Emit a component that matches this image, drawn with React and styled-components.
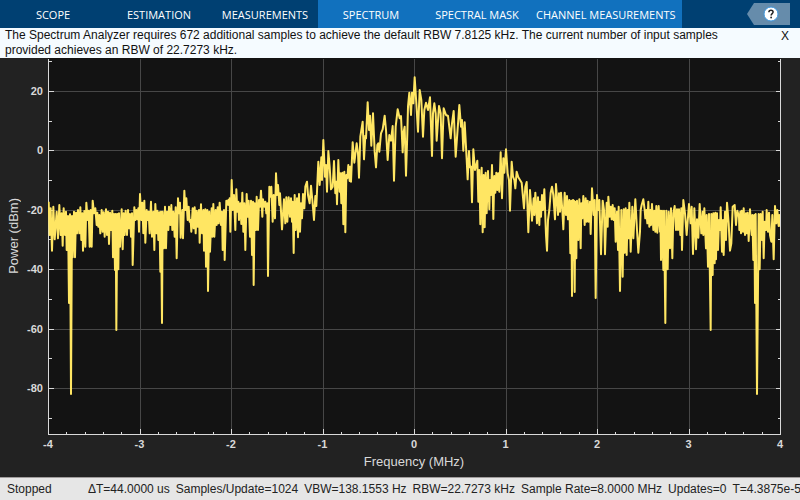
import React from "react";
import styled, { createGlobalStyle } from "styled-components";

const GlobalStyle = createGlobalStyle`
  *, *::before, *::after { box-sizing: border-box; }
  body { margin: 0; background: #222222; font-family: "Liberation Sans", Arial, sans-serif; }
`;

const Window = styled.div`
  display: flex;
  flex-direction: column;
  height: 100vh;
  overflow: hidden;
`;

const Ribbon = styled.header`
  display: flex;
  align-items: stretch;
  flex: none;
  height: 28px;
  background: #004072;
`;

const TabGroup = styled.nav`
  display: flex;
  background: ${(p) => (p.$active ? "#1171be" : "transparent")};
`;

const Tab = styled.button`
  min-width: 106px;
  padding: 2px 6px 0;
  border: 0;
  background: transparent;
  color: #ffffff;
  font: 11px/16px "Open Sans", "Noto Sans", sans-serif;
  white-space: nowrap;
`;

const HelpButton = styled.button`
  align-self: flex-start;
  display: flex;
  align-items: center;
  justify-content: center;
  width: 43px;
  height: 22px;
  margin: 3px 10px 0 auto;
  padding: 0 0 0 5px;
  border: 0;
  background: #668cab;
  clip-path: polygon(0 50%, 7px 0, 100% 0, 100% 100%, 7px 100%);
`;

const Notice = styled.section`
  display: flex;
  align-items: flex-start;
  justify-content: space-between;
  flex: none;
  min-height: 30px;
  padding-left: 5px;
  background: #f5fbff;
  color: #111111;
  font-size: 12px;
  line-height: 15px;
`;

const NoticeText = styled.p`
  max-width: 740px;
  margin: 0;
`;

const CloseButton = styled.button`
  width: 30px;
  padding: 0;
  border: 0;
  background: transparent;
  color: #111111;
  font: 12px/16px "Liberation Sans", Arial, sans-serif;
`;

const ChartPanel = styled.main`
  display: grid;
  grid-template-columns: 48px minmax(0, 1fr);
  flex: 1;
  min-height: 0;
  padding: 0 20px 43px 0;
  background: #222222;
  overflow: hidden;
`;

const YTitle = styled.div`
  justify-self: start;
  align-self: center;
  margin-bottom: 20px;
  padding-right: 6px;
  writing-mode: vertical-rl;
  transform: rotate(180deg);
  color: #d9d9d9;
  font-size: 13px;
  line-height: 16px;
  white-space: nowrap;
`;

const Plot = styled.svg`
  display: block;
  width: 100%;
  height: 100%;
  min-height: 0;
  overflow: visible;
`;

const GridLine = styled.line`
  stroke: #474747;
  shape-rendering: crispEdges;
`;

const AxisLine = styled.line`
  stroke: #d9d9d9;
  shape-rendering: crispEdges;
`;

const TickLabel = styled.text`
  fill: #d9d9d9;
  font: bold 11px "Liberation Sans", Arial, sans-serif;
`;

const AxisTitle = styled.text`
  fill: #d9d9d9;
  font: 13px "Liberation Sans", Arial, sans-serif;
`;

const Trace = styled.polyline`
  fill: none;
  stroke: #ffe663;
  stroke-width: 2px;
  stroke-linejoin: round;
  vector-effect: non-scaling-stroke;
`;

const StatusBar = styled.footer`
  display: flex;
  align-items: center;
  flex: none;
  height: 23px;
  padding-left: 7px;
  border-top: 1px solid #a09c9c;
  background: #e6e6e6;
  color: #222222;
  font-size: 12px;
  line-height: 16px;
  white-space: nowrap;
  overflow: hidden;
`;

const StatusState = styled.span`
  flex: none;
  width: 81px;
`;

const Metrics = styled.div`
  display: flex;
  gap: 6px;
`;

const X_MIN = -4;
const X_MAX = 4;
const Y_MAX = 31.1;
const Y_MIN = -95.5;
const xPct = (v) => `${((v - X_MIN) / (X_MAX - X_MIN)) * 100}%`;
const yPct = (v) => `${((Y_MAX - v) / (Y_MAX - Y_MIN)) * 100}%`;

const X_MAJOR = [-4, -3, -2, -1, 0, 1, 2, 3, 4];
const X_MINOR = Array.from({ length: 41 }, (_, i) => X_MIN + i / 5).filter((_, i) => i % 5);
const Y_MAJOR = [20, 0, -20, -40, -60, -80];
const Y_MINOR = [30, 10, -10, -30, -50, -70, -90];

// Sweep data, split into bands; each band has its own origin on the 2196 x 1128 trace canvas.
const BANDS = [
  {
    x: -24, y: 366,
    points: "26,65 29,165 32,85 36,212 40,80 44,178 50,95 54,175 58,75 62,165 65,100 68,197 71,85 75,165 78,95 80,210 84,108 87,369 90,103 93,642 96,108 98,232 102,95 105,232 108,98 111,160 114,90 118,160 121,82 124,180 127,100 129,212 133,93 136,200 139,68 143,120 146,92 149,200 152,90 155,200 158,62 162,100 166,85 170,135 172,98 175,140 178,105 181,160 185,90 188,155 191,97 194,170 198,88 201,165 204,95 207,192 210,98 213,150 217,92 219,232 222,102 225,270 227,102 229,450 232,102 235,268 237,100 240,200 245,88 248,208 251,100 254,165 257,92 261,165 264,90 267,145 270,102 273,170 276,100 278,255 283,82 286,120 289,90 292,118 295,85 297,155 300,42 304,120 307,68 310,160 313,62 316,188 320,90 323,120 326,95 329,160 333,65 336,170 340,95 343,210 346,72 350,160 352,92 355,180 358,97 361,275 363,95",
  },
  {
    x: 336, y: 336,
    points: "6,459 8,125 12,235 15,110 18,235 21,125 25,180 27,110 31,165 34,105 37,180 40,125 44,200 47,112 50,265 54,85 57,130 60,98 62,203 67,120 69,205 73,62 76,120 79,85 83,150 86,110 89,155 92,150 94,185 98,115 101,175 104,112 107,190 110,122 113,170 117,120 119,218 123,103 126,190 130,120 132,242 136,118 138,290 142,120 144,363 148,125 150,245 155,115 157,200 160,102 163,200 167,120 170,165 173,112 176,160 179,98 183,165 186,125 188,240 192,120 194,270 199,92 201,105 205,90 207,105 209,85 211,185 215,30 218,120 222,75 226,180 229,58 232,125 235,95 237,150 241,100 244,162 247,68 250,185 253,100 256,240 260,72 263,140 266,92 270,200 273,92 276,255 279,95 281,345 284,100 288,180 290,80 294,180 297,90 300,110 303,62 307,140 309,88 313,110 316,95 319,130 322,100 324,318 328,50 331,80 334,50 338,155 341,75 345,145 348,10 351,75 354,45 358,105",
  },
  {
    x: 696, y: 36,
    points: "0,370 6,478 12,388 16,460 19,382 22,455 26,382 30,440 33,385 36,455 38,395 41,549 44,375 47,480 51,385 54,502 57,372 60,485 63,400 66,445 69,372 73,415 76,350 81,335 84,375 89,400 93,347 97,390 102,450 106,378 109,408 115,275 119,345 124,262 126,330 130,210 135,320 138,285 141,365 145,243 149,290 153,358 158,350 162,273 166,370 169,335 171,403 175,270 179,365 181,310 184,400 187,308 190,463 193,305 196,487 199,315 202,325 205,285 209,333 211,290 213,335 218,217 223,278 230,220 234,250 237,323 241,200 248,155 252,268 256,197 258,205 263,97 267,180 270,137 274,227 279,130 284,245 288,292 292,225 295,220 298,245 303,190 308,178 314,137 318,180 323,270 328,195 333,212 338,168 342,332 347,170 353,118 359,145 363,138 368,247 371,185 374,170 378,317 382,190",
  },
  {
    x: 1056, y: 36,
    points: "24,110 28,68 33,135 36,68 40,100 44,22 49,100 54,185 59,60 64,90 69,200 73,120 78,98 84,120 90,82 96,258 99,130 103,100 107,130 110,212 117,108 122,130 126,265 131,115 138,135 144,138 152,205 156,160 161,123 167,260 172,190 178,105 183,170 186,150 190,242 194,157 200,268 203,328 207,243 210,292 213,290 216,397 220,238 225,300 229,285 232,272 235,395 238,300 241,463 245,293 248,487 251,315 254,472 257,308 260,430 264,303 268,418 270,330 273,375 276,285 280,447 283,318 286,368 289,308 292,360 295,310 298,365 302,247 306,385 310,265 313,308 318,238 323,310 327,330 330,422 335,275 339,320 343,330 346,355 350,305 355,322",
  },
  {
    x: 1416, y: 306,
    points: "0,60 5,68 12,145 16,80 20,66 25,217 30,90 36,182 41,115 43,165 46,98 51,190 54,112 58,195 60,125 63,170 66,105 69,150 73,88 78,225 81,272 84,180 88,150 92,98 96,80 100,105 105,178 108,72 114,165 117,100 120,155 123,98 127,150 130,208 134,98 138,165 141,108 144,178 148,120 151,280 154,122 156,408 159,120 161,300 162,122 164,396 166,125 169,295 171,122 175,240 178,118 182,265 184,130 187,175 190,108 194,195 197,115 200,185 203,122 206,185 210,125 212,222 216,85 221,165 224,120 227,414 231,105 234,150 238,120 243,283 248,122 252,150 255,283 260,128 263,200 265,110 269,170 272,140 275,178 278,135 281,180 284,145 287,245 291,155 294,270 296,140 300,393 304,150 308,350 311,148 314,278 317,145 320,285 323,150 326,235 328,128 332,275 337,140 340,235 346,118 351,210 355,278 360,215 362,150 365,135 370,118 374,150 376,175 379,150 382,190 385,125 388,200",
  },
  {
    x: 1806, y: 366,
    points: "1,90 3,135 6,72 10,150 13,92 16,155 19,78 22,158 26,78 30,155 31,92 33,240 36,92 40,270 42,92 46,429 49,92 53,268 56,95 60,205 63,85 67,235 70,100 74,78 78,150 81,88 84,150 87,88 91,165 94,85 96,210 100,60 105,100 110,165 117,72 122,130 125,80 129,222 133,85 138,208 141,118 145,173 149,72 154,160 158,95 160,165 163,85 166,160 168,205 170,105 174,260 177,102 182,450 184,102 188,285 190,100 194,250 196,98 198,238 201,100 204,210 207,120 210,150 212,82 216,215 219,120 221,225 225,95 228,180 231,68 236,130 240,212 244,190 248,80 254,75 258,135 262,92 267,110 268,150 271,95 273,160 275,92 279,155 281,85 285,165 288,100 291,160 293,98 296,183 300,88 303,140 305,165 307,105 310,240 313,105 315,369 317,102 321,642 326,102 329,268 332,102 336,180 338,95 341,235 344,125 348,150 350,90 354,155 357,98 360,165 364,185 367,105 371,238 375,78 379,130 382,90 386,138 388,105 390,140",
  },
];

const TRACE_POINTS = BANDS.map((band) =>
  band.points
    .split(" ")
    .map((pair) => {
      const [x, y] = pair.split(",").map(Number);
      return `${x + band.x},${y + band.y}`;
    })
    .join(" ")
).join(" ");

// A tick is anchored at a percentage and runs a fixed length inwards from its edge.
function YTicks({ values, length }) {
  return values.map((v) => (
    <React.Fragment key={v}>
      <AxisLine x1="0" x2={length} y1={yPct(v)} y2={yPct(v)} />
      <svg x="100%" overflow="visible">
        <AxisLine x1={-length} x2="0" y1={yPct(v)} y2={yPct(v)} />
      </svg>
    </React.Fragment>
  ));
}

function XTicks({ values, length }) {
  return (
    <svg y="100%" overflow="visible">
      {values.map((v) => (
        <AxisLine key={v} x1={xPct(v)} x2={xPct(v)} y1={-length} y2="0" />
      ))}
    </svg>
  );
}

function SpectrumPlot() {
  return (
    <Plot role="img" aria-label="Power spectrum in dBm against frequency in MHz">
      <rect width="100%" height="100%" fill="#131313" />
      <g transform="translate(0.5 0.5)">
        {X_MAJOR.map((v) => (
          <GridLine key={v} x1={xPct(v)} x2={xPct(v)} y1="0" y2="100%" />
        ))}
        {Y_MAJOR.map((v) => (
          <GridLine key={v} x1="0" x2="100%" y1={yPct(v)} y2={yPct(v)} />
        ))}
        <AxisLine x1="0" x2="0" y1="0" y2="100%" />
        <AxisLine x1="100%" x2="100%" y1="0" y2="100%" />
        <AxisLine x1="0" x2="100%" y1="100%" y2="100%" />
        <XTicks values={X_MAJOR} length={6} />
        <XTicks values={X_MINOR} length={3} />
        <YTicks values={Y_MAJOR} length={5} />
        <YTicks values={Y_MINOR} length={3} />
      </g>
      <svg width="100%" height="100%" viewBox="0 0 2196 1128" preserveAspectRatio="none">
        <Trace points={TRACE_POINTS} />
      </svg>
      {Y_MAJOR.map((v) => (
        <TickLabel key={v} x="-5" y={yPct(v)} dy="4" textAnchor="end">{v}</TickLabel>
      ))}
      {X_MAJOR.map((v) => (
        <TickLabel key={v} x={xPct(v)} y="100%" dy="14" textAnchor="middle">{v}</TickLabel>
      ))}
      <AxisTitle x="50%" y="100%" dy="32" textAnchor="middle">Frequency (MHz)</AxisTitle>
    </Plot>
  );
}

const METRICS = [
  "ΔT=44.0000 us",
  "Samples/Update=1024",
  "VBW=138.1553 Hz",
  "RBW=22.7273 kHz",
  "Sample Rate=8.0000 MHz",
  "Updates=0",
  "T=4.3875e-5",
];

export default function App() {
  return (
    <Window>
      <GlobalStyle />
      <Ribbon>
        <TabGroup>
          <Tab type="button">SCOPE</Tab>
          <Tab type="button">ESTIMATION</Tab>
          <Tab type="button">MEASUREMENTS</Tab>
        </TabGroup>
        <TabGroup $active>
          <Tab type="button">SPECTRUM</Tab>
          <Tab type="button">SPECTRAL MASK</Tab>
          <Tab type="button">CHANNEL MEASUREMENTS</Tab>
        </TabGroup>
        <HelpButton type="button" aria-label="Help">
          <svg width="16" height="16" viewBox="0 0 16 16" aria-hidden="true">
            <circle cx="8" cy="8" r="7" fill="#ffffff" stroke="#3d95dc" />
            <path d="M5.9 6.2C5.9 3.5 10.1 3.6 10.1 6.1C10.1 7.7 8.1 7.7 8.1 9.5" fill="none" stroke="#222222" strokeWidth="1.5" />
            <circle cx="8.1" cy="11.5" r="0.9" fill="#222222" />
          </svg>
        </HelpButton>
      </Ribbon>
      <Notice>
        <NoticeText>
          The Spectrum Analyzer requires 672 additional samples to achieve the default RBW 7.8125 kHz. The current number of input samples provided achieves an RBW of 22.7273 kHz.
        </NoticeText>
        <CloseButton type="button" aria-label="Close message">X</CloseButton>
      </Notice>
      <ChartPanel>
        <YTitle>Power (dBm)</YTitle>
        <SpectrumPlot />
      </ChartPanel>
      <StatusBar>
        <StatusState>Stopped</StatusState>
        <Metrics>
          {METRICS.map((m) => (
            <span key={m}>{m}</span>
          ))}
        </Metrics>
      </StatusBar>
    </Window>
  );
}
